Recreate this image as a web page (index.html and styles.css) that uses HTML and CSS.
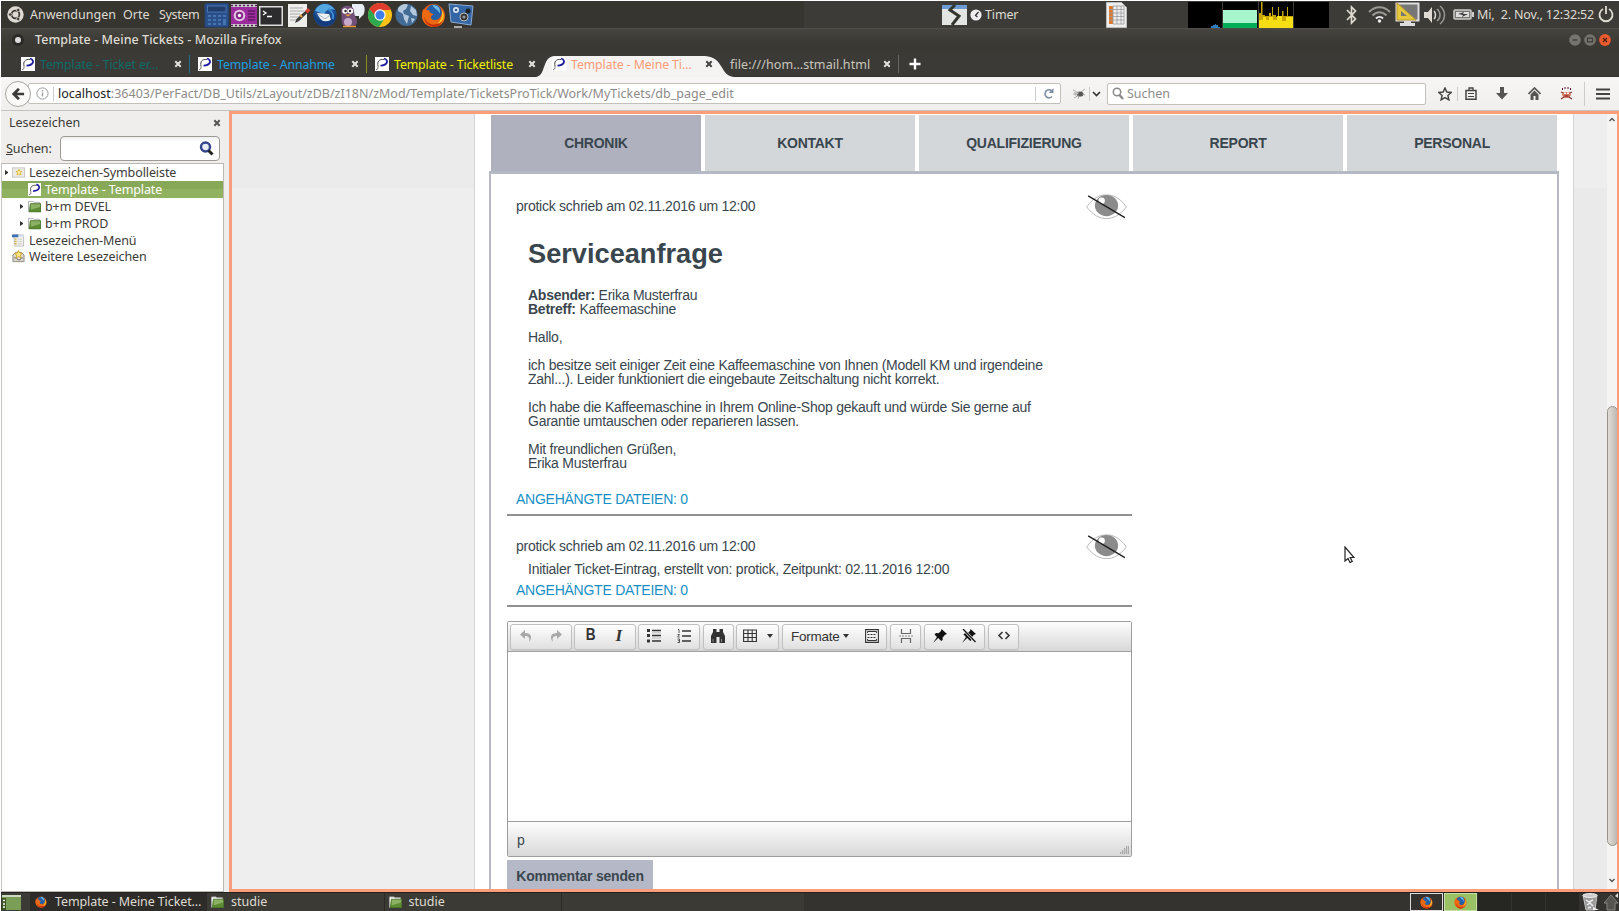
FILE: index.html
```html
<!DOCTYPE html>
<html lang="de">
<head>
<meta charset="utf-8">
<title>Template - Meine Tickets</title>
<link rel="stylesheet" href="styles.css">
</head>
<body>
<svg width="0" height="0" class="defs">
  <defs>
    <symbol id="fav" viewBox="0 0 14 14"><rect width="14" height="14" fill="#fff"/><path d="M3 9C2 4.500 4 2 9 2.500" fill="none" stroke="#444" stroke-width="1"/><path d="M3 9v2.500L1 13" fill="none" stroke="#777"/><path d="M9 1.500C14 3 13 8 5.500 8.700" fill="none" stroke="#1c1c9c" stroke-width="1.800"/></symbol>
    <symbol id="close" viewBox="0 0 8 8"><path d="M1.300 1.300l5.400 5.400M6.700 1.300L1.300 6.700" stroke="currentColor" stroke-width="2"/></symbol>
    <symbol id="ff" viewBox="0 0 24 24"><circle cx="12" cy="12" r="11" fill="#e55b13"/><circle cx="12.500" cy="9" r="7.500" fill="#2360a8"/><path d="M11 2c6 0 8 4 7 8-2-4-5-4-7-8z" fill="#6cbce8"/><path d="M2 6c2 1 4 1 6 1 0 3 3 3 4 4-2 1-3 2-2 4 3 3 8 2 10-2 1-3 0-6-1-8 6 6 5 17-6 18C3 23-1 15 2 6z" fill="#ed6a12"/><path d="M3 13c2 8 11 11 18 3-2 6-7 8-11 6.500-4-1-7-5-7-9.500z" fill="#c62e0c"/><path d="M20 7c4 5 1 12-4 13 3-3 5-7 4-13z" fill="#ffc928"/></symbol>
    <symbol id="folder" viewBox="0 0 14 13"><path d="M.5 12.500V1h5l1 1h6v2" fill="#fff" stroke="#aaa"/><path d="M2.500 3.500h11v9h-12z" fill="#5e8c35" stroke="#4c762b"/><path d="M3 4h10v3L3 10z" fill="#9cbd76" opacity=".75"/></symbol>
    <symbol id="eye" viewBox="0 0 44 30"><path d="M1.500 15.500C8 6 15 3 22 3S36 6 42.500 15.500C36 24 29 27.500 22 27.500S8 24 1.500 15.500Z" fill="#fff" stroke="#b5b5b5"/><ellipse cx="22" cy="14" rx="12" ry="11" fill="#8b8b8b"/><circle cx="17" cy="9" r="3.300" fill="#fff"/><path d="M3 4L41 26.500" stroke="#1d1d1d" stroke-width="1.300"/></symbol>
  </defs>
</svg>

<div class="desktop">
  <header class="panel">
    <svg class="ubuntu" width="17" height="17" viewBox="0 0 17 17"><circle cx="8.500" cy="8.500" r="8.200" fill="#dfdbd2"/><circle cx="8.500" cy="8.500" r="3.900" fill="none" stroke="#3c3b37" stroke-width="1.800"/><g fill="#3c3b37" stroke="#dfdbd2" stroke-width=".7"><circle cx="3.300" cy="8.500" r="1.700"/><circle cx="11.200" cy="4" r="1.700"/><circle cx="11.200" cy="13" r="1.700"/></g></svg>
    <span class="pm pm-apps">Anwendungen</span><span class="pm pm-places">Orte</span><span class="pm pm-system">System</span>
    <div class="launchers">
      <svg viewBox="0 0 26 26"><rect x="1" y="1.500" width="23.500" height="23.500" rx="1.500" fill="#2b4f88" stroke="#234477"/><rect x="3.500" y="4" width="18.500" height="6" fill="#223d68" stroke="#4674b2"/><g fill="#4674b2"><path d="M4 13h3v2H4zM9 13h3v2H9zM14 13h3v2h-3zM19 13h3v2h-3zM4 17h3v2H4zM9 17h3v2H9zM14 17h3v2h-3zM19 17h3v6h-3zM4 21h3v2H4zM9 21h3v2H9zM14 21h3v2h-3z"/></g></svg>
      <svg viewBox="0 0 26 26"><rect y="2" width="26" height="23" fill="#c9c9c9"/><rect y="5" width="26" height="17" fill="#9b2c9d"/><path d="M0 3.500h26M0 23.500h26" stroke="#57205b" stroke-width="1.500" stroke-dasharray="2 2"/><circle cx="8.500" cy="13.500" r="5.800" fill="#e3c4e5"/><circle cx="8.500" cy="13.500" r="3.700" fill="#822585"/><circle cx="8.500" cy="13.500" r="1.700" fill="#fff"/><path d="M17 9h7M17 12h7M17 15h7M17 18h7" stroke="#64186a" stroke-width="1.500"/></svg>
      <svg viewBox="0 0 26 26"><rect x="1" y="4" width="24" height="20" fill="#ddd"/><rect x="2.500" y="5.500" width="21" height="17" fill="#2c2c2e"/><path d="M5 9l3 2-3 2M9 14.500h5" stroke="#fff" stroke-width="1.300" fill="none"/></svg>
      <svg viewBox="0 0 26 26"><path d="M3 2h19v23H3z" fill="#eeeeec"/><path d="M5 6h13M5 9h14M5 12h10M5 15h9M5 18h7" stroke="#aaa" stroke-width="1"/><path d="M22.500 7l2 2L14 19l-4 2 1.500-4z" fill="#3a3a3a"/><path d="M20 9l2.500 2.500 3-3L23 6z" fill="#d84030"/><path d="M15 13l2 2" stroke="#e8a33a" stroke-width="2"/></svg>
      <svg viewBox="0 0 26 26"><circle cx="13" cy="13" r="11.500" fill="#1d4f92"/><path d="M3 9c3-8 14-10 20-1-5-2-9 0-11 4z" fill="#55a7e0"/><path d="M5 11l12 1 2 6c-4 5-10 2-14-7z" fill="#f1f3f4"/><path d="M6 12l7 5 5-4" fill="none" stroke="#a7b4be"/><path d="M1 10c0 8 5 14 12 14 7 0 12-5 11-13-3 6-6 9-12 8-6 0-8-4-11-9z" fill="#143c7c"/><path d="M16 7c4 2 6 6 5 10" fill="none" stroke="#3a8ad0" stroke-width="2"/></svg>
      <svg viewBox="0 0 26 26"><path d="M13 2h10c4 1 3 11 0 12l-3 3v-3h-7z" fill="#e8eef2"/><path d="M2 9C2 2 15 2 15 9c0 5 4 8 3 12-2 5-14 5-15 0-1-5 0-8-1-12z" fill="#735078"/><circle cx="6" cy="9" r="2.700" fill="#fff"/><circle cx="11.500" cy="9" r="2.700" fill="#fff"/><circle cx="6.500" cy="9" r="1.200" fill="#222"/><circle cx="11" cy="9" r="1.200" fill="#222"/><path d="M6 12.500h6l-3 2z" fill="#ef9d27"/><ellipse cx="9" cy="20" rx="4" ry="4" fill="#c6aacb"/><path d="M4 24.500h13" stroke="#e89b38" stroke-width="1.500"/></svg>
      <svg viewBox="0 0 26 26"><circle cx="13" cy="13" r="12" fill="#fbc116"/><path d="M2.600 7A12 12 0 0 1 24 8H13L8 15z" fill="#df3c2d"/><path d="M2.600 7A12 12 0 0 0 12 25l5-8-7-1z" fill="#2da94f"/><circle cx="13" cy="13" r="5.700" fill="#fff"/><circle cx="13" cy="13" r="4.500" fill="#3f7ee8"/></svg>
      <svg viewBox="0 0 26 26"><circle cx="12.500" cy="13" r="11" fill="#426b96"/><path d="M4 6c3-4 8-5 10-3l-2 4-3 2 1 3 5 2-2 8-3-5-1-5-5-3zM17 4l5 4 1 6-4-1-3-4zM17 16l4 1-3 4z" fill="#b4c9dd"/></svg>
      <svg viewBox="0 0 26 26"><use href="#ff" x="0" y="1" width="25" height="25"/></svg>
      <svg viewBox="0 0 26 26"><path d="M1 2l24 2-2 19L3 20z" fill="#3465a4" stroke="#8bacd4"/><circle cx="8" cy="8" r="3" fill="#dbe6f1"/><circle cx="8" cy="8" r="1.300" fill="#345b8d"/><circle cx="16" cy="15" r="4" fill="#333" stroke="#bbb"/><circle cx="16" cy="15" r="1.600" fill="#999"/><circle cx="20" cy="9" r="2.500" fill="#222"/><path d="M6 25h8" stroke="#aaa" stroke-width="2"/></svg>
    </div>
    <svg class="hamster" width="25" height="20" viewBox="0 0 25 20"><path d="M0 0h25v20H0z" fill="#e3e5e2"/><path d="M0 0h25v4H0z" fill="#6c9cd2"/><path d="M13 0L8 5l9 6-7 9" fill="none" stroke="#35352f" stroke-width="3"/></svg>
    <svg class="clock" width="12" height="12" viewBox="0 0 12 12"><circle cx="6" cy="6" r="5.600" fill="#eee"/><path d="M8.500 3L5.500 6.500 7.500 8" fill="none" stroke="#333" stroke-width="1.300"/></svg>
    <span class="pm pm-timer">Timer</span>
    <svg class="sheet" width="21" height="26" viewBox="0 0 21 26"><path d="M.5.5h15l5 5v20H.5z" fill="#eee" stroke="#bcbcbc"/><path d="M3 4h4v18H3z" fill="#e07a2c"/><path d="M7 4h11v18H7zM7 7.500h11M7 11h11M7 14.500h11M7 18h11M11 4v18M15 4v18M3 7.500h4M3 11h4M3 14.500h4M3 18h4" fill="none" stroke="#999" stroke-width=".8"/></svg>
    <svg class="graphs" width="141" height="27" viewBox="0 0 141 27"><path d="M0 1h34v26H0zM35 1h35v26H35zM71 1h34v26H71zM106 1h35v26h-35z" fill="#000"/><path d="M23 27v-2h2v-1h2v-1h1v1h2v2h2v1z" fill="#2c7bc0"/><path d="M35 9h34v13H35z" fill="#a6f5cc"/><path d="M35 22h34v5H35z" fill="#04ad57"/><path d="M71 27V12h2V1h1.500v13H77v1h4v-3h2v3h1V6h1v8h3v2h2V6h1v9h3v-5h1.500v5H99V6h1v9h5v12z" fill="#c7a500"/><path d="M71 27v-8h4v-3h3v3h3v-3h4v3h4v-4h5v5h4v-4h7v11z" fill="#f5df14"/></svg>
    <svg class="bt" width="11" height="20" viewBox="0 0 11 20"><path d="M1 5l8.500 9-4 4V2l4 4L1 15" fill="none" stroke="#dfdbd2" stroke-width="1.700"/></svg>
    <svg class="wifi" width="23" height="17" viewBox="0 0 23 17"><path d="M1 6C7-.5 16-.5 22 6M4.500 9.500c4-4.500 10-4.500 14 0" stroke="#999891" fill="none" stroke-width="2"/><path d="M8 12.500c2-2 5-2 7 0" stroke="#eee" stroke-width="2" fill="none"/><circle cx="11.500" cy="15" r="1.700" fill="#eee"/></svg>
    <svg class="mon" width="25" height="25" viewBox="0 0 25 25"><rect x="1.500" y="1.500" width="22" height="17" fill="#777" stroke="#ddd" stroke-width="2"/><path d="M2 1l19 17H2z" fill="#e6c83d" stroke="#bb992a"/><path d="M6 9v5h6z" fill="#777"/><path d="M9 19h7v2h4v3H5v-3h4z" fill="#ddd"/></svg>
    <svg class="vol" width="23" height="20" viewBox="0 0 23 20"><path d="M1 7h4l4-5v16l-4-5H1z" fill="#dfdbd2"/><path d="M11 6c2 2 2 6 0 8" stroke="#dfdbd2" stroke-width="1.500" fill="none"/><path d="M14 4c4 3 4 9 0 12M17 1c6 5 6 13 0 18" stroke="#999891" stroke-width="1.500" fill="none"/></svg>
    <svg class="bat" width="21" height="11" viewBox="0 0 21 11"><rect x="1" y="1" width="17" height="9" rx="1" fill="#77766f" stroke="#ccc" stroke-width="1.500"/><path d="M19 3h2v5h-2z" fill="#ccc"/><path d="M3 3h13v5H3z" fill="#ddd"/><path d="M5 5l6-2-1 2h5L9 8l1-2z" fill="#3c3b37"/></svg>
    <span class="pm pm-date">Mi,&nbsp; 2. Nov., 12:32:52</span>
    <svg class="power" width="16" height="17" viewBox="0 0 16 17"><path d="M5 3a6.500 6.500 0 1 0 6 0M8 0v8" fill="none" stroke="#dfdbd2" stroke-width="1.800"/></svg>
  </header>

  <div class="titlebar">
    <i class="dot"></i><span class="wtitle">Template - Meine Tickets - Mozilla Firefox</span>
    <div class="wbtns">
      <svg viewBox="0 0 12 12"><circle cx="6" cy="6" r="5.800" fill="#76746d"/><path d="M3.500 6h5" stroke="#3c3b37" stroke-width="1.300"/></svg>
      <svg viewBox="0 0 12 12"><circle cx="6" cy="6" r="5.800" fill="#76746d"/><path d="M3.500 4.200h5v3.600h-5z" fill="none" stroke="#3c3b37" stroke-width="1.200"/></svg>
      <svg viewBox="0 0 12 12"><circle cx="6" cy="6" r="5.900" fill="#ea5b2f"/><path d="M4 4l4 4M8 4L4 8" stroke="#4a1e0e" stroke-width="1.200"/></svg>
    </div>
  </div>

  <nav class="tabs">
    <div class="tab t1"><svg class="fav"><use href="#fav"/></svg><span>Template - Ticket er…</span><svg class="x"><use href="#close"/></svg></div>
    <div class="tab t2"><svg class="fav"><use href="#fav"/></svg><span>Template - Annahme</span><svg class="x"><use href="#close"/></svg></div>
    <div class="tab t3"><svg class="fav"><use href="#fav"/></svg><span>Template - Ticketliste</span><svg class="x"><use href="#close"/></svg></div>
    <div class="tab t4"><svg class="shape" viewBox="0 0 198 21"><path d="M0 21C10 20 6 1 18 0H169C188 1 184 20 198 21Z" fill="#f4f3f2"/></svg><svg class="fav"><use href="#fav"/></svg><span>Template - Meine Ti…</span><svg class="x"><use href="#close"/></svg></div>
    <div class="tab t5"><span>file:///hom…stmail.html</span><svg class="x"><use href="#close"/></svg></div>
    <svg class="plus" width="12" height="12" viewBox="0 0 12 12"><path d="M6 .5v11M.5 6h11" stroke="#fff" stroke-width="2.400"/></svg>
  </nav>

  <div class="toolbar">
    <div class="back"><svg width="13" height="12" viewBox="0 0 15 14"><path d="M8 1L2 7l6 6M2.500 7H14" fill="none" stroke="#3c3b37" stroke-width="3.200"/></svg></div>
    <div class="urlbar">
      <svg class="info" width="13" height="13" viewBox="0 0 13 13"><circle cx="6.500" cy="6.500" r="5.600" fill="none" stroke="#999"/><path d="M6.500 5.500v4M6.500 3v1.500" stroke="#999" stroke-width="1.300"/></svg>
      <i class="vs"></i>
      <span class="url"><b>localhost</b>:36403/PerFact/DB_Utils/zLayout/zDB/zI18N/zMod/Template/TicketsProTick/Work/MyTickets/db_page_edit</span>
      <i class="vs rs"></i>
      <svg class="reload" width="10" height="11" viewBox="0 0 10 11"><path d="M8 8.500A4 4 0 1 1 7.500 2.600" fill="none" stroke="#7d8ea3" stroke-width="1.700"/><path d="M9.500 0v5H4.700z" fill="#7d8ea3"/></svg>
    </div>
    <svg class="fly" width="14" height="12" viewBox="0 0 14 12"><ellipse cx="8" cy="6" rx="3.500" ry="2.600" fill="#555"/><path d="M1 2l6 3M1 6h5M2 10l5-3M9 4l4-3M10 6l3 1M7 8l-1 3" stroke="#999" stroke-width=".8"/><path d="M2 4l5 1-4 3z" fill="#bbb"/></svg>
    <i class="vs fs"></i>
    <svg class="chev" width="9" height="6" viewBox="0 0 9 6"><path d="M1 1l3.500 3.500L8 1" fill="none" stroke="#333" stroke-width="1.600"/></svg>
    <div class="search"><svg width="12" height="13" viewBox="0 0 12 13"><circle cx="5" cy="5" r="3.700" fill="none" stroke="#888" stroke-width="1.500"/><path d="M7.500 8l3.500 4" stroke="#888" stroke-width="2.200"/></svg><span>Suchen</span></div>
    <svg class="star" width="14" height="14" viewBox="0 0 14 14"><path d="M7 1l1.800 4.100 4.400.4-3.300 2.900 1 4.400L7 10.500l-3.900 2.300 1-4.400L.8 5.500l4.400-.4z" fill="none" stroke="#444" stroke-width="1.500"/></svg>
    <i class="vs ss"></i>
    <svg class="clip" width="12" height="13" viewBox="0 0 12 13"><path d="M1 3.500h10v8.700H1z" fill="none" stroke="#444" stroke-width="1.500"/><path d="M4 3.500V1h4v2.500" fill="none" stroke="#444" stroke-width="1.300"/><path d="M3 6.500h6M3 9.500h6" stroke="#444"/></svg>
    <svg class="down" width="12" height="13" viewBox="0 0 12 13"><path d="M4 0h4v6h4l-6 6.500L0 6h4z" fill="#555"/></svg>
    <svg class="home" width="13" height="13" viewBox="0 0 13 13"><path d="M.5 7L6.500 1l6 6" fill="none" stroke="#555" stroke-width="1.700"/><path d="M2.500 7.500l4-4 4 4V13h-3V9h-2v4h-3z" fill="#555"/></svg>
    <svg class="mon2" width="13" height="13" viewBox="0 0 13 13"><path d="M3 5h7l1 3-2 3H4L2 8z" fill="#d07a5f"/><path d="M2 1h1v2H2zM10 1h1v2h-1zM4.500 0h1v2h-1zM7.500 0h1v2h-1z" fill="#5a1040"/><path d="M1 5l2 1M12 5l-2 1M1 12l3-2M12 12L9 10" stroke="#8a3030" stroke-width="1.200"/><path d="M4 5.500h2v1.500H4zM7 5.500h2v1.500H7z" fill="#fff"/><path d="M4.500 9h4" stroke="#712"/></svg>
    <i class="vs ms"></i>
    <svg class="menu" width="14" height="12" viewBox="0 0 14 12"><path d="M0 1.500h14M0 6h14M0 10.500h14" stroke="#444" stroke-width="2"/></svg>
  </div>

  <main class="main">
    <aside class="sidebar">
      <div class="sb-head"><span>Lesezeichen</span><svg class="x"><use href="#close"/></svg></div>
      <div class="sb-search"><label><u>S</u>uchen:</label><div class="sb-input"><svg width="15" height="15" viewBox="0 0 15 15"><circle cx="6.500" cy="6" r="4.500" fill="#e9edf8" stroke="#34448c" stroke-width="2.400"/><path d="M9.500 9.500l4 4" stroke="#222" stroke-width="3"/></svg></div></div>
      <ul class="tree">
        <li class="l0"><i class="tri"></i><svg viewBox="0 0 14 13"><rect x=".5" y="1.500" width="13" height="10" fill="#eceae7" stroke="#c9c6c1"/><path d="M7.500 3l1 2.200 2.300.2-1.800 1.500.6 2.300-2.100-1.200-2.100 1.200.6-2.300-1.800-1.500 2.300-.2z" fill="#fff2a8" stroke="#d8b32d" stroke-width=".9"/></svg><span>Lesezeichen-Symbolleiste</span></li>
        <li class="l1 sel"><i class="tri none"></i><svg viewBox="0 0 14 14"><use href="#fav"/></svg><span>Template - Template</span></li>
        <li class="l1"><i class="tri"></i><svg viewBox="0 0 14 13"><use href="#folder"/></svg><span>b+m DEVEL</span></li>
        <li class="l1"><i class="tri"></i><svg viewBox="0 0 14 13"><use href="#folder"/></svg><span>b+m PROD</span></li>
        <li class="l0"><i class="tri none"></i><svg viewBox="0 0 14 13"><path d="M1.500.5h11v12h-10v-9h-1z" fill="#f4f3ef" stroke="#bbb"/><path d="M0 0h7v3H0z" fill="#3f6fb5"/><path d="M7 .5h6v2H7z" fill="#d5dfec"/><path d="M3 5h2M3 7.500h2M3 10h2" stroke="#ddb83b" stroke-width="1.500"/><path d="M6 5h5M6 7.500h5M6 10h5" stroke="#ccc"/></svg><span>Lesezeichen-Menü</span></li>
        <li class="l0"><i class="tri none"></i><svg viewBox="0 0 14 13"><path d="M1 5l3-3h6l3 3v7H1z" fill="#ddd9cf" stroke="#8b877d"/><path d="M2 8h3l1 2h3l1-2h2" fill="none" stroke="#77736b"/><path d="M7 0l1.300 2.800 3 .3L9 5l.7 3L7 6.500 4.300 8 5 5 2.700 3.100l3-.3z" fill="#fbe77a" stroke="#c99c1e" stroke-width=".8"/></svg><span>Weitere Lesezeichen</span></li>
      </ul>
    </aside>

    <section class="viewport">
      <div class="gutter gl"></div>
      <div class="page">
        <div class="ptabs"><a class="on">CHRONIK</a><a>KONTAKT</a><a>QUALIFIZIERUNG</a><a>REPORT</a><a>PERSONAL</a></div>
        <div class="pbox">
          <article class="entry e1">
            <div class="meta"><span>protick schrieb am 02.11.2016 um 12:00</span><svg class="eye"><use href="#eye"/></svg></div>
            <div class="msg">
              <h1>Serviceanfrage</h1>
              <p><b>Absender:</b> Erika Musterfrau<br><b>Betreff:</b> Kaffeemaschine</p>
              <p>Hallo,</p>
              <p>ich besitze seit einiger Zeit eine Kaffeemaschine von Ihnen (Modell KM und irgendeine<br>Zahl...). Leider funktioniert die eingebaute Zeitschaltung nicht korrekt.</p>
              <p>Ich habe die Kaffeemaschine in Ihrem Online-Shop gekauft und würde Sie gerne auf<br>Garantie umtauschen oder reparieren lassen.</p>
              <p>Mit freundlichen Grüßen,<br>Erika Musterfrau</p>
            </div>
            <a class="files">ANGEHÄNGTE DATEIEN: 0</a>
          </article>
          <article class="entry e2">
            <div class="meta"><span>protick schrieb am 02.11.2016 um 12:00</span><svg class="eye"><use href="#eye"/></svg></div>
            <div class="msg"><p>Initialer Ticket-Eintrag, erstellt von: protick, Zeitpunkt: 02.11.2016 12:00</p></div>
            <a class="files">ANGEHÄNGTE DATEIEN: 0</a>
          </article>
          <div class="editor">
            <div class="etools">
              <div class="g g1"><svg viewBox="0 0 14 14"><path d="M6 1L1 5.500 6 10V7c4 0 5 2 4 6 4-5 2-9-4-9z" fill="#a8a8a8"/></svg><svg viewBox="0 0 14 14"><path d="M8 1l5 4.500L8 10V7c-4 0-5 2-4 6-4-5-2-9 4-9z" fill="#a8a8a8"/></svg></div>
              <div class="g g1 bi"><b class="bold">B</b><b class="ital">I</b></div>
              <div class="g g1"><svg viewBox="0 0 14 14"><path d="M5 1.500h9M5 6.600h9M5 12h9" stroke="#333" stroke-width="1.500"/><path d="M5 3.800h9M5 9h9" stroke="#aaa" stroke-width=".7"/><path d="M0 0h3v3H0zM0 5h3v3H0zM0 10.500h3v3H0z" fill="#333"/></svg><svg viewBox="0 0 14 14"><path d="M5 2h9M5 7h9M5 12h9" stroke="#333" stroke-width="1.500"/><path d="M1 .5h1V4M.5 5.500h2L.7 8h2M.5 10h2v3.500h-2M1 11.700h1.500" fill="none" stroke="#333" stroke-width=".8"/></svg></div>
              <div class="g g2"><svg viewBox="0 0 14 14"><path d="M2 0h3.500v3h3V0H12v3l2 4v7H8.500V8h-3v6H0V7l2-4z" fill="#333"/><path d="M2 10v3M10.500 10v3" stroke="#aaa" stroke-width=".7"/></svg></div>
              <div class="g g3"><svg viewBox="0 0 14 14"><path d="M.6 1h12.800v11.500H.6zM.6 4.500h12.800M.6 8.500h12.800M5 1v11.500M9.200 1v11.500" fill="none" stroke="#333" stroke-width="1.100"/></svg><i class="caret"></i></div>
              <div class="g g4"><span>Formate</span><i class="caret"></i><svg viewBox="0 0 14 14"><path d="M.6.600h12.800v12.800H.6z" fill="none" stroke="#333" stroke-width="1.100"/><path d="M2.500 4V2.500h9V4M2.500 10v1.500h9V10" fill="none" stroke="#333"/><path d="M2.500 5.500h9M2.500 8.500h9" stroke="#333" stroke-dasharray="2 1"/></svg></div>
              <div class="g g2"><svg viewBox="0 0 14 14"><path d="M2.500 0v4.500h9V0M2.500 14V9.500h9V14" fill="none" stroke="#666" stroke-width="1.200"/><path d="M0 7h14" stroke="#888" stroke-dasharray="2 1"/></svg></div>
              <div class="g g1"><svg viewBox="0 0 14 14"><path d="M8.500 0L14 5l-2 .7-2.500 3 .2 2.300-1.500 1-3-3L0 14l4-6-2.500-2.500L3 4l2.500.3L8 2z" fill="#111"/></svg><svg viewBox="0 0 14 14"><path d="M8.500 0L14 5l-2 .7-2.500 3 .2 2.300-1.500 1-3-3L0 14l4-6-2.500-2.500L3 4l2.500.3L8 2z" fill="#111"/><path d="M1 0l12.500 13" stroke="#f0f0f0" stroke-width="2.600"/><path d="M1 0l12.500 13" stroke="#111" stroke-width="1.300"/></svg></div>
              <div class="g g2"><svg viewBox="0 0 14 14"><path d="M5.500 3L2 6.500 5.500 10M8.500 3L12 6.500 8.500 10" fill="none" stroke="#333" stroke-width="1.600"/></svg></div>
            </div>
            <div class="ebody"></div>
            <div class="efoot"><span>p</span><svg width="9" height="9" viewBox="0 0 9 9"><path d="M0 8h9M2 6h7M4 4h5M6 2h3" stroke="#777" stroke-dasharray="1.300 .7" stroke-width="1.200"/></svg></div>
          </div>
          <button class="send">Kommentar senden</button>
        </div>
      </div>
      <div class="gutter gr"></div>
      <div class="sbar">
        <svg width="8" height="5" viewBox="0 0 8 5"><path d="M1.500 4L4 1.500 6.500 4" fill="none" stroke="#555" stroke-width="1.400"/></svg>
        <div class="thumb"></div>
        <svg class="dn" width="8" height="5" viewBox="0 0 8 5"><path d="M1.500 1L4 3.500 6.500 1" fill="none" stroke="#555" stroke-width="1.400"/></svg>
      </div>
      <svg class="cursor" width="11" height="18" viewBox="0 0 11 18"><path d="M1 1v14l3-2.500 2 4 2.300-1-2.100-4H10z" fill="#fff" stroke="#222" stroke-width="1.200"/></svg>
    </section>
  </main>

  <footer class="taskbar">
    <svg class="desk" width="19" height="15" viewBox="0 0 19 15"><rect width="19" height="15" fill="#7a9e55"/><path d="M0 1h19" stroke="#cdd8c0" stroke-width="2"/><path d="M0 3h4v12H0z" fill="#3c5522"/><path d="M1 5.500h2M1 9h2M1 12h2" stroke="#fff" stroke-width="1.500"/></svg>
    <div class="task a"><svg width="12" height="12"><use href="#ff"/></svg><span>Template - Meine Ticket…</span></div>
    <div class="task"><svg width="13" height="12"><use href="#folder"/></svg><span>studie</span></div>
    <div class="task"><svg width="13" height="12"><use href="#folder"/></svg><span>studie</span></div>
    <div class="ws"><div class="w"><svg width="13" height="13"><use href="#ff"/></svg></div><div class="w cur"><svg width="13" height="13"><use href="#ff"/></svg></div><div></div><div></div><div></div></div>
    <svg class="trash" width="18" height="18" viewBox="0 0 18 18"><path d="M1 2h14l-2 15H4z" fill="#999" stroke="#c5c5c5"/><ellipse cx="8" cy="2.500" rx="7" ry="2" fill="#ccc" stroke="#eee"/><path d="M4 7l3 2 4-2M5 12l3-2 3 3M6 15l3-1" stroke="#eee" stroke-width="1.500" fill="none"/><path d="M11 14l6 3h-6z" fill="#eee"/></svg>
    <svg class="up" width="14" height="18" viewBox="0 0 14 18"><path d="M7 2l7 8h-3v7H3v-7H0z" fill="#55544f" stroke="#85847e"/><path d="M14 0v5l-3-2z" fill="#ddd"/></svg>
  </footer>
</div>
</body>
</html>
```

FILE: styles.css
```css
* { box-sizing: border-box; }
body { margin: 0; width: 1619px; height: 911px; overflow: hidden; background: #fff; font-family: "Noto Sans", sans-serif; font-size: 12.5px; color: #3c3b37; }
.defs { position: absolute; }
svg { display: block; flex: none; }
.desktop { display: flex; flex-direction: column; width: 1619px; height: 911px; padding: 1px 0 0 1px; }

/* top panel */
.panel { display: flex; align-items: center; height: 27px; background: linear-gradient(90deg, #363530 0 803px, #3c3b37 803px); color: #dfdbd2; flex: none; overflow: hidden; }
.panel > * { flex: none; }
.ubuntu { margin-left: 6px; }
.pm { white-space: nowrap; line-height: 26px; }
.pm-apps { width: 93px; margin-left: 6px; }
.pm-places { width: 36px; }
.pm-system { width: 46px; letter-spacing: -.35px; }
.launchers { display: flex; gap: 1.100px; width: 272px; margin-left: -1px; }
.launchers svg { width: 26px; height: 26px; }
.hamster { margin-left: 466px; }
.clock { margin-left: 3px; }
.pm-timer { margin-left: 3px; width: 33px; letter-spacing: -.15px; }
.sheet { margin-left: 88px; }
.graphs { margin-left: 61px; }
.bt { margin-left: 17px; }
.wifi { margin-left: 11px; }
.mon { margin-left: 4px; }
.vol { margin-left: 3px; }
.bat { margin-left: 7px; }
.pm-date { margin-left: 3px; width: 117px; letter-spacing: -.15px; }
.power { margin-left: 4px; }

.titlebar { display: flex; align-items: center; height: 24px; padding-bottom: 2px; flex: none; background: linear-gradient(#45443f, #3a3934 60%); border-top: 1px solid #504f49; color: #dfdbd2; font-weight: 500; }
.dot { width: 6px; height: 6px; border-radius: 50%; background: #ddd; box-shadow: 0 0 0 3px #2b2a27; margin-left: 14px; }
.wtitle { margin-left: 14px; width: 247px; white-space: nowrap; letter-spacing: .05px; }
.wbtns { display: flex; gap: 3px; margin-left: auto; margin-right: 8px; }
.wbtns svg { width: 12px; height: 12px; }

.tabs { display: flex; height: 25px; flex: none; background: #3b3a36; align-items: center; border-bottom: 1px solid #33322e; }
.tab { display: flex; align-items: center; height: 25px; width: 177px; position: relative; padding-left: 20px; flex: none; border-right: 1px solid transparent; }
.tab span { white-space: nowrap; width: 134px; margin-left: 5px; font-size: 12.3px; position: relative; letter-spacing: -.1px; }
.fav { width: 14px; height: 14px; position: relative; }
.x { width: 8px; height: 8px; color: #e6e3dc; position: relative; }
.t1 { width: 190px; color: #0d6b68; background: linear-gradient(#1d6f8f, #1d6f8f) 100% 50% / 1px 18px no-repeat; }
.t2 { color: #1d9fe0; padding-left: 7px; background: linear-gradient(#8f8f1a, #8f8f1a) 100% 50% / 1px 18px no-repeat; }
.t3 { color: #f2f200; padding-left: 7px; width: 176px; }
.t4 { color: #ff9b76; padding-left: 8px; width: 185px; }
.t4 .x { color: #444; }
.t4 .shape { position: absolute; left: -8px; top: 4px; width: 198px; height: 21px; }
.t5 { color: #c9c6be; padding-left: 1px; width: 171px; background: linear-gradient(#66655f, #66655f) 100% 50% / 1px 18px no-repeat; }
.t5 span { width: 153px; margin-left: 0; font-size: 12.5px; letter-spacing: .1px; }
.plus { margin-left: 9px; }

.toolbar { display: flex; align-items: center; height: 34px; flex: none; background: linear-gradient(#f7f6f5, #f0efee); border-bottom: 1px solid #c6c2bd; }
.toolbar > * { flex: none; }
.back { width: 26px; height: 26px; margin-left: 4px; border: 1px solid #aaa6a0; border-radius: 50%; background: #faf9f8; display: flex; align-items: center; justify-content: center; position: relative; }
.urlbar { width: 1033px; height: 21px; margin-left: -3px; border: 1px solid #c3bfb9; border-radius: 2px; background: #fff; display: flex; align-items: center; padding-left: 7px; }
.vs { width: 1px; height: 14px; background: #ccc; }
.info + .vs { margin-left: 4px; }
.url { margin-left: 4px; width: 977px; color: #8d8b88; white-space: nowrap; }
.url b { font-weight: 400; color: #222; }
.reload { margin-left: 8px; }
.fly { margin-left: 11px; }
.fs { margin-left: 3px; }
.chev { margin-left: 2px; }
.search { width: 319px; height: 22px; margin-left: 6px; border: 1px solid #c3bfb9; border-radius: 2px; background: #fff; display: flex; align-items: center; padding-left: 4px; color: #8d8b88; }
.search span { margin-left: 3px; }
.star { margin-left: 12px; }
.ss { margin-left: 5px; }
.clip { margin-left: 7px; }
.down { margin-left: 19px; }
.home { margin-left: 20px; }
.mon2 { margin-left: 19px; }
.ms { margin-left: 11px; height: 24px; }
.menu { margin-left: 11px; }

.main { display: flex; height: 781px; flex: none; }
.sidebar { width: 228px; background: #efeeec; flex: none; padding-right: 6px; }
.sb-head { height: 23px; display: flex; align-items: center; justify-content: space-between; padding: 0 2px 0 8px; }
.sb-head .x { color: #555; }
.sb-search { display: flex; align-items: center; height: 29px; padding-left: 5px; letter-spacing: -.1px; }
.sb-search label { width: 54px; }
.sb-input { width: 160px; height: 25px; border: 1px solid #9d9a95; border-radius: 4px; background: linear-gradient(#eee, #fff 20%); display: flex; align-items: center; justify-content: flex-end; padding-right: 5px; }
.tree { list-style: none; margin: 0; padding: 0; border: 1px solid #bcb9b3; border-left: 1px solid #c8c6c1; background: #fff; height: 729px; width: 223px; }
.tree li { height: 16.9px; display: flex; align-items: center; }
.tree li svg { width: 13px; height: 13px; margin-right: 4px; }
.tree span { white-space: nowrap; line-height: 17px; letter-spacing: -.1px; }
.tri { border: 2.500px solid transparent; border-left: 3px solid #333; border-right: 0; width: 3px; height: 5px; margin: 0 4px 0 3px; }
.tri.none { border-color: transparent; }
.l1 .tri { margin-left: 18px; margin-right: 5px; }
.sel { background: linear-gradient(#87a856 50%, #90b15f 50%); color: #fff; }

/* browser content */
.viewport { position: relative; display: flex; width: 1390px; border: 3px solid #f99d7b; border-width: 3px 2px 3px 3px; overflow: hidden; background: #fff; }
.gutter { flex: none; }
.gl { width: 243px; background: linear-gradient(#ebebeb 74px, #eee 74px); border-right: 1px solid #d5d5d5; }
.gr { width: 34px; background: linear-gradient(#eee 74px, #eaeaea 74px); border-left: 1px solid #d5d5d5; }
.page { width: 1098px; padding: 1px 14px 0; flex: none; font-family: "Liberation Sans", Arial, sans-serif; font-size: 14px; letter-spacing: -.25px; line-height: 14.400px; color: #3a464e; }
.ptabs { display: flex; gap: 4.200px; height: 56px; padding: 0 2px; }
.ptabs a { flex: 1; background: #d4d7da; display: flex; align-items: center; justify-content: center; font-weight: 700; }
.ptabs a.on { background: #afb1bf; }
.pbox { height: 740px; border: 2px solid #b5b8c5; border-top-width: 3px; padding: 0 16px; }
.entry { width: 625px; border-bottom: 2px solid #8f9193; padding: 0 0 0 9px; }
.e1 { height: 342px; padding-top: 17px; }
.e2 { height: 91px; padding-top: 15px; }
.meta { display: flex; justify-content: space-between; align-items: center; height: 30px; padding-right: 4px; }
.eye { width: 43px; height: 29px; }
.eye, .meta span { flex: none; }
.msg { padding-left: 12px; white-space: nowrap; }
.msg p { margin: 0 0 13.300px; }
.msg h1 { font-size: 27.200px; line-height: 30px; margin: 18px 0 19px; letter-spacing: 0; }
.files { display: block; color: #168fc6; }
.e1 .files { margin-top: 21px; }
.e2 .msg p { margin: 1px 0 7px; }
.editor { width: 625px; height: 236px; margin-top: 14px; border: 1px solid #9e9e9e; border-radius: 2px; display: flex; flex-direction: column; }
.etools { height: 30px; display: flex; gap: 2.700px; padding: 2px; border-bottom: 1px solid #9e9e9e; background: linear-gradient(#fdfdfd, #d8d8d8); }
.g { height: 26px; border: 1px solid #c0c0c0; border-radius: 3px; background: linear-gradient(#fefefe, #e0e0e0); display: flex; align-items: center; justify-content: space-around; padding-bottom: 3px; color: #333; flex: none; box-shadow: 0 1px 1px #ccc; }
.g svg { width: 14px; height: 14px; }
.g1 { width: 61.500px; }
.g2 { width: 31px; }
.g3 { width: 43px; }
.g4 { width: 105.500px; padding: 0 7px 3px 8px; justify-content: flex-start; }
.g4 span { width: 52px; font-size: 13.500px; padding-top: 3px; }
.g4 svg { margin-left: 16px; }
.caret { border: 3.500px solid transparent; border-top: 4px solid #333; border-bottom: 0; }
.bi { padding-right: 3px; }
.bold { font-size: 16px; transform: scaleX(.85); }
.ital { font: italic 700 17px "Liberation Serif", serif; }
.ebody { flex: 1; background: #fff; }
.efoot { height: 35px; border-top: 1px solid #9e9e9e; background: linear-gradient(#fdfdfd, #d8d8d8); display: flex; justify-content: space-between; align-items: center; padding: 3px 2px 0 9px; }
.efoot svg { align-self: flex-end; margin-bottom: 2px; }
.send { display: block; margin: 3px 0 0; width: 146px; height: 33px; border: 0; padding: 0 0 1px; background: #b5b8c6; color: #3a464e; font: 700 14px "Liberation Sans", Arial, sans-serif; letter-spacing: -.2px; }
.sbar { width: 10px; background: #f6f4f2; display: flex; flex-direction: column; align-items: center; padding: 3px 0 6px; flex: none; }
.thumb { width: 11px; height: 440px; margin-top: 284px; border: 1px solid #96918b; border-radius: 6px; background: linear-gradient(90deg, #e1ded9, #bdb8b1); flex: none; }
.dn { margin-top: auto; }
.cursor { position: absolute; left: 1112px; top: 432px; }

.taskbar { display: flex; height: 19px; flex: none; align-items: center; background: linear-gradient(90deg, #3b3a35 0 803px, #34332f 803px); color: #dfdbd2; border-top: 1px solid #22211e; overflow: hidden; }
.desk { margin-left: 1px; }
.task { width: 177.500px; height: 19px; display: flex; align-items: center; padding-left: 4px; flex: none; border-right: 1px solid #2b2a27; }
.task span { margin-left: 7px; line-height: 18px; white-space: nowrap; }
.task.a { width: 177px; margin-left: 9px; padding-left: 5px; background: #2d2c29; }
.task.a span { margin-left: 8px; letter-spacing: -.1px; }
.ws { display: flex; margin-left: 848px; gap: 1px; height: 18px; }
.ws div { width: 33px; background: #262623; display: flex; align-items: center; justify-content: center; }
.ws .w { border: 1px solid #ddd; background: #33322f; }
.ws .cur { background: #9ac265; border-color: #c5dda8; }
.trash { margin-left: 3px; }
.up { margin-left: 4px; }
```
